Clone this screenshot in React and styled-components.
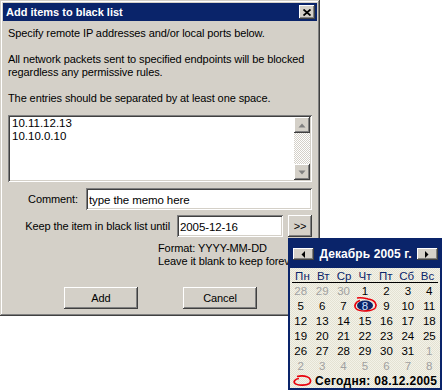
import styled, { createGlobalStyle } from "styled-components";

const GlobalStyle = createGlobalStyle`
  html, body {
    margin: 0;
    padding: 0;
    background: #ffffff;
  }
  body {
    font-family: "Liberation Sans", Arial, sans-serif;
    font-size: 11px;
  }
`;

const NAVY = "#0a246a";
const FACE = "#d4d0c8";

const raised = `
  box-shadow: inset -1px -1px #404040, inset 1px 1px #ffffff,
    inset -2px -2px #808080, inset 2px 2px ${FACE};
`;

const sunken = `
  box-shadow: inset 1px 1px #808080, inset -1px -1px #ffffff,
    inset 2px 2px #404040, inset -2px -2px ${FACE};
`;

const Page = styled.div`
  position: relative;
  width: 443px;
  height: 391px;
  overflow: hidden;
`;

const Window = styled.div`
  box-sizing: border-box;
  width: 320px;
  height: 316px;
  padding: 3px;
  background: ${FACE};
  box-shadow: inset -1px -1px #404040, inset 1px 1px ${FACE},
    inset -2px -2px #808080, inset 2px 2px #ffffff;
  display: flex;
  flex-direction: column;
  color: #000;
  letter-spacing: -0.1px;
`;

const TitleBar = styled.div`
  height: 18px;
  background: ${NAVY};
  display: flex;
  align-items: center;
  justify-content: space-between;
  padding: 0 2px 0 3px;
  color: #fff;
  font-weight: bold;
  font-size: 11px;
  letter-spacing: 0;
`;

const CloseButton = styled.div`
  width: 16px;
  height: 14px;
  background: ${FACE};
  ${raised}
  display: flex;
  align-items: center;
  justify-content: center;
`;

const Body = styled.div`
  flex: 1;
  display: flex;
  flex-direction: column;
  padding: 0 5px;
`;

const Para = styled.p`
  margin: ${(p) => p.$top}px 0 0;
  line-height: 13px;
  margin-left: ${(p) => p.$indent || 0}px;
  white-space: nowrap;
`;

const TextBox = styled.div`
  margin-top: 10px;
  height: 67px;
  box-sizing: border-box;
  padding: 2px;
  background: #fff;
  ${sunken}
  display: flex;
`;

const Lines = styled.div`
  flex: 1;
  padding: 0 2px;
  line-height: 13px;
  font-size: 11.5px;
  letter-spacing: 0;
`;

const ScrollBar = styled.div`
  width: 16px;
  display: flex;
  flex-direction: column;
`;

const ScrollButton = styled.div`
  height: 16px;
  background: ${FACE};
  ${raised}
  display: flex;
  align-items: center;
  justify-content: center;
`;

const ScrollTrack = styled.div`
  flex: 1;
  background: repeating-conic-gradient(${FACE} 0 25%, #ffffff 0 50%) 0 0 / 2px 2px;
`;

const FieldRow = styled.div`
  margin-top: ${(p) => p.$top}px;
  height: 22px;
  display: flex;
  align-items: center;
  justify-content: flex-end;
  gap: ${(p) => p.$gap}px;
`;

const Label = styled.span`
  white-space: nowrap;
`;

const Field = styled.input`
  box-sizing: border-box;
  width: ${(p) => p.$width}px;
  height: 22px;
  border: none;
  outline: none;
  padding: 2px 3px 0;
  background: #fff;
  ${sunken}
  font-family: "Liberation Sans", Arial, sans-serif;
  font-size: 11.5px;
  letter-spacing: -0.1px;
  color: #000;
`;

const SmallButton = styled.div`
  width: 24px;
  height: 22px;
  margin-left: -2px;
  background: ${FACE};
  ${raised}
  display: flex;
  align-items: center;
  justify-content: center;
  font-size: 11px;
`;

const ButtonRow = styled.div`
  margin-top: 19px;
  display: flex;
  justify-content: center;
  gap: 45px;
  padding-left: 1px;
`;

const PushButton = styled.div`
  width: 74px;
  height: 22px;
  background: ${FACE};
  ${raised}
  display: flex;
  align-items: center;
  justify-content: center;
`;

/* calendar popup */

const Calendar = styled.div`
  position: absolute;
  left: 288px;
  top: 238px;
  width: 154px;
  height: 152px;
  box-sizing: border-box;
  border: 2px solid ${NAVY};
  background: repeating-conic-gradient(#f3f2e8 0 25%, #e4e2d3 0 50%) 0 0 / 2px 2px;
  display: flex;
  flex-direction: column;
  font-family: "Liberation Sans", Arial, sans-serif;
`;

const CalHeader = styled.div`
  height: 28px;
  background: ${NAVY};
  display: flex;
  align-items: center;
  justify-content: space-between;
  padding: 0 2px 0 3px;
  color: #fff;
  font-weight: bold;
  font-size: 12px;
  letter-spacing: 0.1px;
`;

const ArrowButton = styled.div`
  width: 21px;
  height: 12px;
  background: ${FACE};
  ${raised}
  display: flex;
  align-items: center;
  justify-content: center;
`;

const WeekDays = styled.div`
  height: 13px;
  margin: 0 2px;
  border-bottom: 1px solid #000;
  display: grid;
  grid-template-columns: repeat(7, 1fr);
  align-items: center;
  color: ${NAVY};
  font-size: 11.5px;
  text-align: center;
  padding-top: 1px;
`;

const DayGrid = styled.div`
  display: grid;
  grid-template-columns: repeat(7, 1fr);
  grid-auto-rows: 15px;
  font-size: 11.5px;
  text-align: center;
`;

const Day = styled.div`
  position: relative;
  display: flex;
  align-items: center;
  justify-content: center;
  color: ${(p) => (p.$muted ? "#a0a0a0" : "#000")};
`;

const TodayMark = styled.svg`
  position: absolute;
  left: -2px;
  top: -2px;
`;

const TodayNum = styled.span`
  position: relative;
  color: #cfe0ff;
`;

const Footer = styled.div`
  height: 15px;
  display: flex;
  align-items: center;
  gap: 3px;
  padding-left: 3px;
  font-weight: bold;
  font-size: 12px;
  letter-spacing: 0.3px;
`;

const weekDays = ["Пн", "Вт", "Ср", "Чт", "Пт", "Сб", "Вс"];

const days = [
  ...[28, 29, 30].map((d) => ({ d, muted: true })),
  ...Array.from({ length: 31 }, (_, i) => ({ d: i + 1 })),
  ...[1, 2, 3, 4, 5, 6, 7, 8].map((d) => ({ d, muted: true })),
];

const Triangle = ({ dir, color = "#000" }) => {
  const pts = {
    left: "4,0 4,7 0.5,3.5",
    right: "0,0 0,7 3.5,3.5",
  };
  if (dir === "up" || dir === "down") {
    return (
      <svg width="8" height="5" viewBox="0 0 8 5">
        <polygon
          points={dir === "up" ? "4,0.5 7.5,4.5 0.5,4.5" : "0.5,0.5 7.5,0.5 4,4.5"}
          fill={color}
        />
      </svg>
    );
  }
  return (
    <svg width="5" height="7" viewBox="0 0 5 7">
      <polygon points={pts[dir]} fill={color} />
    </svg>
  );
};

const App = () => {
  return (
    <>
      <GlobalStyle />
      <Page>
        <Window>
          <TitleBar>
            <span>Add items to black list</span>
            <CloseButton>
              <svg width="8" height="7" viewBox="0 0 8 7">
                <path d="M0.5 0.5 L7.5 6.5 M7.5 0.5 L0.5 6.5" stroke="#000" strokeWidth="1.8" />
              </svg>
            </CloseButton>
          </TitleBar>
          <Body>
            <Para $top={6}>Specify remote IP addresses and/or local ports below.</Para>
            <Para $top={13}>
              All network packets sent to specified endpoints will be blocked
              <br />
              regardless any permissive rules.
            </Para>
            <Para $top={13}>The entries should be separated by at least one space.</Para>
            <TextBox>
              <Lines>
                10.11.12.13
                <br />
                10.10.0.10
              </Lines>
              <ScrollBar>
                <ScrollButton>
                  <Triangle dir="up" color="#808080" />
                </ScrollButton>
                <ScrollTrack />
                <ScrollButton>
                  <Triangle dir="down" color="#808080" />
                </ScrollButton>
              </ScrollBar>
            </TextBox>
            <FieldRow $top={6} $gap={8}>
              <Label>Comment:</Label>
              <Field $width={226} defaultValue="type the memo here" readOnly />
            </FieldRow>
            <FieldRow $top={5} $gap={7}>
              <Label>Keep the item in black list until</Label>
              <Field $width={106} defaultValue="2005-12-16" readOnly />
              <SmallButton>&gt;&gt;</SmallButton>
            </FieldRow>
            <Para $top={5} $indent={150}>
              Format: YYYY-MM-DD
              <br />
              Leave it blank to keep forever.
            </Para>
            <ButtonRow>
              <PushButton>Add</PushButton>
              <PushButton>Cancel</PushButton>
            </ButtonRow>
          </Body>
        </Window>

        <Calendar>
          <CalHeader>
            <ArrowButton>
              <Triangle dir="left" />
            </ArrowButton>
            <span>Декабрь 2005 г.</span>
            <ArrowButton>
              <Triangle dir="right" />
            </ArrowButton>
          </CalHeader>
          <WeekDays>
            {weekDays.map((w) => (
              <span key={w}>{w}</span>
            ))}
          </WeekDays>
          <DayGrid>
            {days.map((item, i) =>
              !item.muted && item.d === 8 ? (
                <Day key={i}>
                  <TodayMark width="26" height="17" viewBox="0 0 26 17">
                    <ellipse cx="13" cy="9.5" rx="8" ry="5" fill={NAVY} />
                    <path
                      d="M5 2 C9 1 14 2.5 16 3 C23 4 25 8 23.5 11.5 C21.5 15.5 8 16 4.5 13 C1.5 10.5 3 6 8 4.5"
                      fill="none"
                      stroke="#e8000b"
                      strokeWidth="1.6"
                    />
                  </TodayMark>
                  <TodayNum>{item.d}</TodayNum>
                </Day>
              ) : (
                <Day key={i} $muted={item.muted}>
                  {item.d}
                </Day>
              )
            )}
          </DayGrid>
          <Footer>
            <svg width="19" height="11" viewBox="0 0 19 11">
              <path
                d="M4 1.5 C8 0.5 12 1 14 1.8 C18 3 18.5 7 16 8.8 C12.5 10.8 4 10.5 2 8.5 C0 6.5 2 4 6 3.5"
                fill="none"
                stroke="#e8000b"
                strokeWidth="1.7"
              />
            </svg>
            <span>Сегодня: 08.12.2005</span>
          </Footer>
        </Calendar>
      </Page>
    </>
  );
};

export default App;
